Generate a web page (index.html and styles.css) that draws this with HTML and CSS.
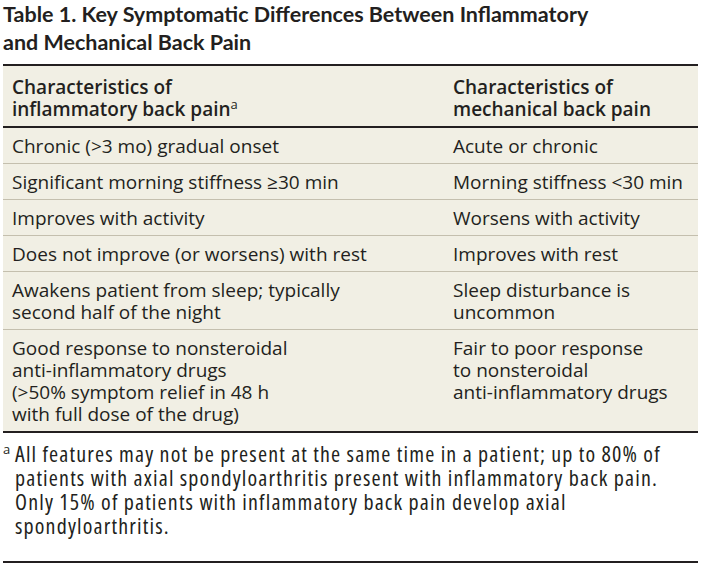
FILE: index.html
```html
<!DOCTYPE html>
<html>
<head>
<meta charset="utf-8">
<link rel="stylesheet" href="styles.css">
</head>
<body>
<div class="figure">
  <h1 class="title">Table 1. Key Symptomatic Differences Between Inflammatory<br>and Mechanical Back Pain</h1>
  <table class="tbl">
    <thead>
      <tr>
        <th class="c1">Characteristics of<br>inflammatory back pain<sup>a</sup></th>
        <th class="c2">Characteristics of<br>mechanical back pain</th>
      </tr>
    </thead>
    <tbody>
      <tr><td class="c1">Chronic (&gt;3 mo) gradual onset</td><td class="c2">Acute or chronic</td></tr>
      <tr><td class="c1">Significant morning stiffness ≥30 min</td><td class="c2">Morning stiffness &lt;30 min</td></tr>
      <tr><td class="c1">Improves with activity</td><td class="c2">Worsens with activity</td></tr>
      <tr><td class="c1">Does not improve (or worsens) with rest</td><td class="c2">Improves with rest</td></tr>
      <tr><td class="c1">Awakens patient from sleep; typically<br>second half of the night</td><td class="c2">Sleep disturbance is<br>uncommon</td></tr>
      <tr><td class="c1">Good response to nonsteroidal<br>anti-inflammatory drugs<br>(&gt;50% symptom relief in 48 h<br>with full dose of the drug)</td><td class="c2">Fair to poor response<br>to nonsteroidal<br>anti-inflammatory drugs</td></tr>
    </tbody>
  </table>
  <div class="note">
    <span class="mark">a</span>
    <p class="note-text">All features may not be present at the same time in a patient; up to 80% of<br>patients with axial spondyloarthritis present with inflammatory back pain.<br>Only 15% of patients with inflammatory back pain develop axial<br>spondyloarthritis.</p>
  </div>
</div>
</body>
</html>
```
FILE: styles.css
```css
html, body {
  margin: 0;
  padding: 0;
  background: #ffffff;
}
.figure {
  width: 695px;
  padding: 0 0 0 3px;
  color: #231f20;
  font-family: "Open Sans", sans-serif;
}
.title {
  margin: 0;
  font-family: "Lato", "Open Sans", sans-serif;
  font-size: 21.5px;
  font-weight: 700;
  line-height: 28px;
  white-space: nowrap;
}
.tbl {
  margin-top: 8px;
  width: 695px;
  border-collapse: collapse;
  background: #f1efe4;
  border-top: 2px solid #231f20;
  border-bottom: 2px solid #231f20;
  font-size: 19px;
  line-height: 22px;
}
.tbl th {
  text-align: left;
  font-weight: 600;
  vertical-align: top;
  padding: 10px 8px 6px 9px;
  border-bottom: 2px solid #231f20;
}
.tbl td {
  vertical-align: top;
  padding: 6.5px 8px 6.5px 9px;
  border-top: 1px solid #c4bfae;
}
.tbl tbody tr:first-child td {
  border-top: none;
}
.c1 { width: 424px; }
.tbl sup {
  font-size: 13px;
  font-weight: 500;
  line-height: 0;
  vertical-align: 7px;
}
.note {
  display: flex;
  padding: 8px 0 24px 0;
  border-bottom: 2px solid #231f20;
  width: 695px;
}
.mark {
  font-size: 13px;
  width: 12px;
  line-height: 16px;
  flex: none;
}
.note-text {
  margin: 0;
  font-size: 22px;
  font-stretch: 75%;
  letter-spacing: 1.15px;
  line-height: 24px;
  white-space: nowrap;
}
```
